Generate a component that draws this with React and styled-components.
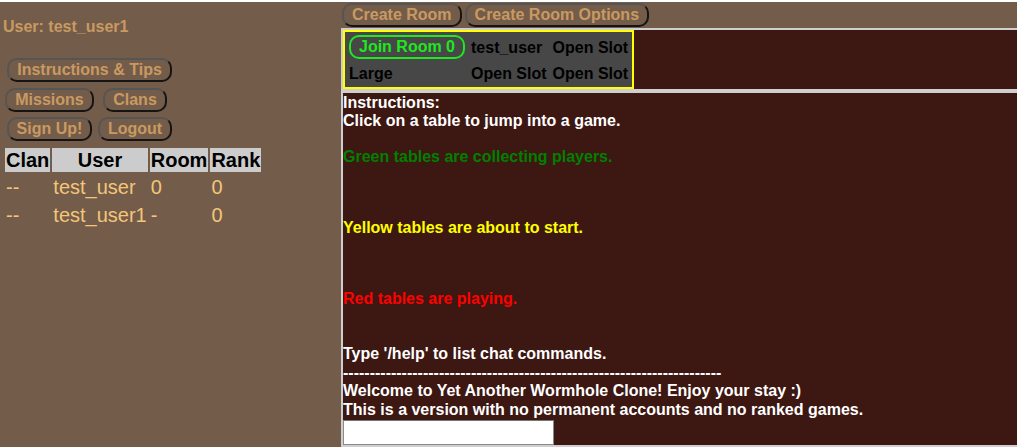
import React from "react";
import styled, { createGlobalStyle } from "styled-components";

const Global = createGlobalStyle`
  html, body { margin: 0; padding: 0; background: #ffffff; }
  body { font-family: "Liberation Sans", Arial, sans-serif; overflow: hidden; }
`;

const Page = styled.div`
  margin-top: 2px;
  height: 445px;
  width: 1017px;
  display: flex;
  background: #745c4a;
  overflow: hidden;
`;

const Sidebar = styled.div`
  width: 341px;
  flex: none;
  display: flex;
  flex-direction: column;
  align-items: flex-start;
`;

const UserName = styled.div`
  margin: 16px 0 0 3px;
  color: #c89a62;
  font-weight: bold;
  font-size: 16px;
  line-height: 18.4px;
`;

const MenuGrid = styled.div`
  margin: 22px 0 0 5px;
  display: grid;
  grid-template-columns: 89px 78px;
  column-gap: 2px;
  row-gap: 5.5px;
  justify-items: center;
`;

const Btn = styled.button`
  box-sizing: border-box;
  height: 24px;
  padding: 0 8px;
  margin: 0;
  border: 2px solid;
  border-color: #555555 #141414 #141414 #555555;
  border-radius: 10px;
  background: transparent;
  color: #c89a62;
  font-family: "Liberation Sans", Arial, sans-serif;
  font-weight: bold;
  font-size: 16px;
  line-height: 20px;
  white-space: nowrap;
  cursor: pointer;
  grid-column: ${(p) => (p.$wide ? "1 / span 2" : "auto")};
`;

const UserTable = styled.table`
  margin: 5px 0 0 3px;
  border-spacing: 2px;
  font-size: 20px;
  line-height: 22px;
`;

const Th = styled.th`
  background: #cccccc;
  color: #000000;
  font-weight: bold;
  padding: 1px;
  text-align: center;
  white-space: nowrap;
`;

const Td = styled.td`
  color: #f3c679;
  padding: 1px;
  line-height: 24px;
  text-align: left;
  white-space: nowrap;
`;

const Main = styled.div`
  flex: 1;
  display: flex;
  flex-direction: column;
  min-width: 0;
`;

const TopBar = styled.div`
  height: 26px;
  box-sizing: border-box;
  padding: 1px 0 0 1px;
  display: flex;
  gap: 3px;
  align-items: flex-start;
`;

const RoomArea = styled.div`
  height: 59px;
  background: #3d1711;
  border: 2px solid #cfcfcf;
  border-right: none;
  overflow: hidden;
  display: flex;
  align-items: flex-start;
`;

const RoomBox = styled.div`
  border: 2px solid #ffff00;
  background: #474747;
`;

const RoomTable = styled.table`
  border-spacing: 2px;
  font-size: 16px;
  font-weight: bold;
  color: #000000;
  line-height: 18px;
`;

const RoomCell = styled.td`
  padding: 2px;
  white-space: nowrap;
  text-align: left;
  vertical-align: middle;
`;

const JoinBtn = styled.button`
  box-sizing: border-box;
  display: block;
  height: 24px;
  margin: -1px 0 0 0;
  padding: 0 8px;
  border: 2px solid #1ee81e;
  border-radius: 10px;
  background: transparent;
  color: #1ee81e;
  font-family: "Liberation Sans", Arial, sans-serif;
  font-weight: bold;
  font-size: 16px;
  line-height: 20px;
  white-space: nowrap;
  cursor: pointer;
`;

const ChatArea = styled.div`
  flex: 1;
  background: #3d1711;
  border: 2px solid #cfcfcf;
  border-right: none;
  overflow: hidden;
  display: flex;
  flex-direction: column;
  align-items: flex-start;
  padding-top: 0.5px;
`;

const Msg = styled.div`
  color: ${(p) => p.$color || "#ffffff"};
  margin-top: ${(p) => p.$gap || 0}px;
  font-size: 16px;
  font-weight: bold;
  line-height: 18.5px;
  white-space: nowrap;
`;

const ChatInput = styled.input`
  box-sizing: border-box;
  width: 211px;
  height: 25px;
  margin: 1px 0 0 0;
  border: 1px solid #8a8a8a;
  border-top-color: #767676;
  background: #ffffff;
  font-size: 16px;
  padding: 0 2px;
  outline: none;
`;

const users = [
  { clan: "--", name: "test_user", room: "0", rank: "0" },
  { clan: "--", name: "test_user1", room: "-", rank: "0" },
];

export default function App() {
  return (
    <>
      <Global />
      <Page>
        <Sidebar>
          <UserName>User: test_user1</UserName>
          <MenuGrid>
            <Btn $wide>Instructions &amp; Tips</Btn>
            <Btn>Missions</Btn>
            <Btn>Clans</Btn>
            <Btn>Sign Up!</Btn>
            <Btn>Logout</Btn>
          </MenuGrid>
          <UserTable>
            <thead>
              <tr>
                <Th>Clan</Th>
                <Th>User</Th>
                <Th>Room</Th>
                <Th>Rank</Th>
              </tr>
            </thead>
            <tbody>
              {users.map((u) => (
                <tr key={u.name}>
                  <Td>{u.clan}</Td>
                  <Td>{u.name}</Td>
                  <Td>{u.room}</Td>
                  <Td>{u.rank}</Td>
                </tr>
              ))}
            </tbody>
          </UserTable>
        </Sidebar>
        <Main>
          <TopBar>
            <Btn>Create Room</Btn>
            <Btn>Create Room Options</Btn>
          </TopBar>
          <RoomArea>
            <RoomBox>
              <RoomTable>
                <tbody>
                  <tr>
                    <RoomCell>
                      <JoinBtn>Join Room 0</JoinBtn>
                    </RoomCell>
                    <RoomCell>test_user</RoomCell>
                    <RoomCell>Open Slot</RoomCell>
                  </tr>
                  <tr>
                    <RoomCell>Large</RoomCell>
                    <RoomCell>Open Slot</RoomCell>
                    <RoomCell>Open Slot</RoomCell>
                  </tr>
                </tbody>
              </RoomTable>
            </RoomBox>
          </RoomArea>
          <ChatArea>
            <Msg>Instructions:</Msg>
            <Msg>Click on a table to jump into a game.</Msg>
            <Msg $gap={17} $color="#008000">Green tables are collecting players.</Msg>
            <Msg $gap={53} $color="#ffff00">Yellow tables are about to start.</Msg>
            <Msg $gap={52} $color="#ff0000">Red tables are playing.</Msg>
            <Msg $gap={37}>Type '/help' to list chat commands.</Msg>
            <Msg>{"-".repeat(71)}</Msg>
            <Msg>Welcome to Yet Another Wormhole Clone! Enjoy your stay :)</Msg>
            <Msg>This is a version with no permanent accounts and no ranked games.</Msg>
            <ChatInput type="text" />
          </ChatArea>
        </Main>
      </Page>
    </>
  );
}
